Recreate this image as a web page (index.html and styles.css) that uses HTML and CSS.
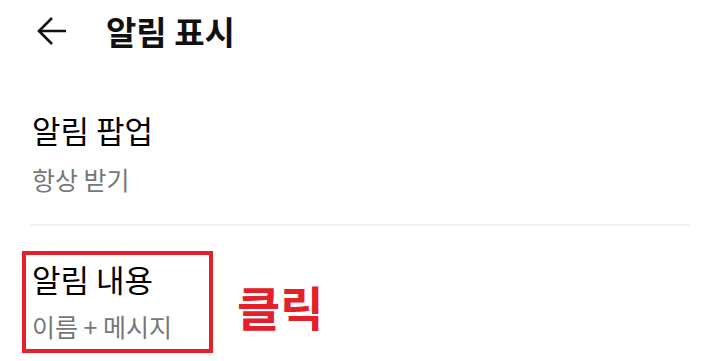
FILE: index.html
```html
<!DOCTYPE HTML>
<html>

<head>
    <meta charset="utf-8">
    <link rel="stylesheet" href="styles.css">
</head>

<body>
    <div class="header">
        <svg class="back" width="32" height="30" viewBox="0 0 32 30">
            <path d="M30 15H3M16 2L3 15l13 13" fill="none" stroke="#111" stroke-width="2.6" />
        </svg>
        <h1 class="title">알림 표시</h1>
    </div>

    <div class="item">
        <div class="item-title">알림 팝업</div>
        <div class="item-sub">항상 받기</div>
    </div>

    <div class="divider"></div>

    <div class="row">
        <div class="item boxed">
            <div class="item-title">알림 내용</div>
            <div class="item-sub">이름 + 메시지</div>
        </div>
        <div class="click">클릭</div>
    </div>
</body>

</html>
```

FILE: styles.css
```css
body {
    margin: 0;
    background: #fff;
    font-family: "Noto Sans CJK KR", "Noto Sans", sans-serif;
    color: #111;
}

.header {
    display: flex;
    align-items: center;
    height: 62px;
    padding-left: 36px;
}

.back {
    display: block;
}

.title {
    margin: 0 0 0 38px;
    font-size: 33px;
    font-weight: bold;
    line-height: 1;
}

.item {
    padding: 48px 32px 0;
}

.item-title {
    font-size: 31px;
    font-weight: 400;
    color: #000;
    line-height: 40px;
}

.item-sub {
    margin-top: 12px;
    font-size: 25px;
    color: #777;
    line-height: 34px;
}

.divider {
    height: 2px;
    margin: 28px 30px 0;
    background: #f3f3f3;
}

.row {
    display: flex;
    align-items: center;
    margin-top: 25px;
    padding-left: 22px;
}

.boxed {
    box-sizing: border-box;
    width: 191px;
    height: 102px;
    padding: 4px 6px 0 6px;
    border: 4px solid #e4202a;
}

.boxed .item-sub {
    margin-top: 10px;
}

.click {
    margin: 6px 0 0 24px;
    font-size: 47px;
    font-weight: bold;
    color: #e4202a;
    line-height: 1;
}
```
